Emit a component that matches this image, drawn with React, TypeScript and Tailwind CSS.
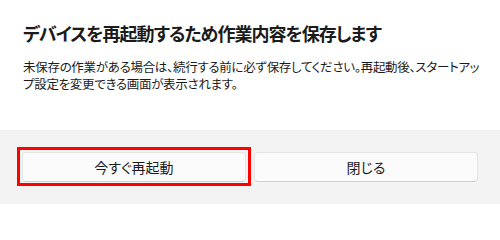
export default function App() {
  return (
    <div
      className="relative h-[204px] w-[500px] overflow-hidden bg-white text-[#1b1b1b]"
      style={{ fontFamily: '"Noto Sans CJK JP", "Noto Sans", sans-serif', fontFeatureSettings: '"palt"' }}
    >
      <div className="h-[130px] pl-[23px] pr-[18px] pt-[20px]">
        <h1 className="text-[18px] font-semibold leading-[26px] tracking-[-1px]">
          デバイスを再起動するため作業内容を保存します
        </h1>
        <p className="mt-[12px] text-[12.5px] leading-[17px] tracking-[-0.3px]">
          未保存の作業がある場合は、続行する前に必ず保存してください。再起動後、スタートアップ設定を変更できる画面が表示されます。
        </p>
      </div>

      <div className="flex h-[74px] gap-2 bg-[#f3f3f3] px-[22px] pt-[22px]">
        <button className="h-[30px] flex-1 rounded-[4px] border border-[#e5e5e5] border-b-[#d0d0d0] bg-[#fbfbfb] text-[14px] text-[#1b1b1b]">
          今すぐ再起動
        </button>
        <button className="h-[30px] flex-1 rounded-[4px] border border-[#e5e5e5] border-b-[#d0d0d0] bg-[#fbfbfb] text-[14px] text-[#1b1b1b]">
          閉じる
        </button>
      </div>

      {/* annotation highlight */}
      <div className="pointer-events-none absolute left-[17px] top-[147px] h-[39px] w-[234px] border-[3px] border-[#ff0000]" />
    </div>
  );
}
